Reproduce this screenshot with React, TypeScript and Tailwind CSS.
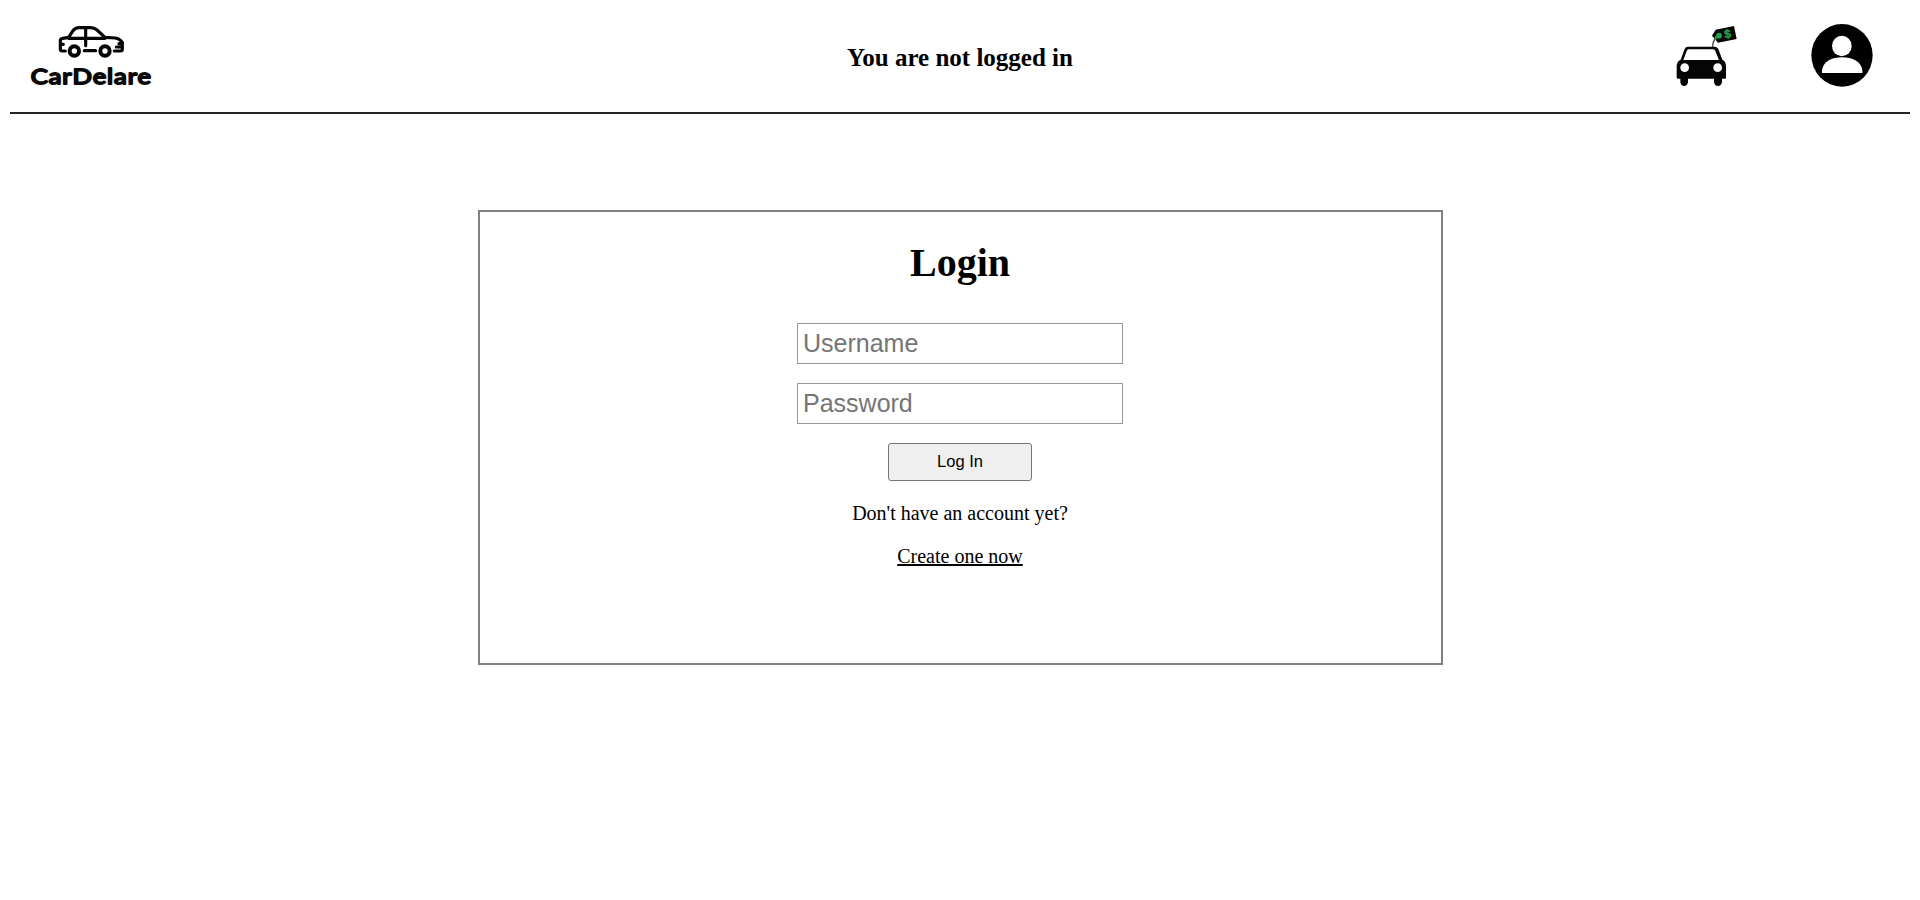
function Logo() {
  return (
    <svg className="h-[68px] w-[130px]" viewBox="84 36 390 204" fill="none" role="img" aria-label="CarDelare">
      <g stroke="#050505" strokeWidth="9.500" strokeLinecap="round" strokeLinejoin="round">
        <path d="M196 123 H187 Q181 123 181 117 V92 Q181 86 188 85 L206 82 L219 62 Q226 53 238 53 H272 Q283 53 291 60 L315 82 L346 84 Q360 86 367 97 V118 Q367 123 361 123 H343" />
        <path d="M206 85 H315 M257 55 V107 M183 103 H190 M357 101 H366 M349 111 H365" />
        <path d="M253 122 H287" />
      </g>
      <circle cx="223" cy="123" r="14" fill="#fff" stroke="#050505" strokeWidth="12" />
      <circle cx="315" cy="123" r="14" fill="#fff" stroke="#050505" strokeWidth="12" />
      <text
        x="92"
        y="223"
        textLength="364"
        lengthAdjust="spacingAndGlyphs"
        letterSpacing="2.500"
        className="fill-[#090909] font-['Lato',sans-serif] text-[66px] font-normal"
        stroke="#090909"
        strokeWidth="5.500"
        strokeLinecap="round"
        strokeLinejoin="round"
      >
        CarDelare
      </text>
    </svg>
  );
}

function CarSaleIcon() {
  return (
    <svg className="h-[64px] w-[64px]" viewBox="45 42 192 192" role="img" aria-label="Cars for sale">
      <path d="M158 112 Q158 94 167 84" fill="none" stroke="#444" strokeWidth="4" />
      <path d="M156 77 L167 59 L222 48 L230 87 L174 98 Z" fill="#050505" />
      <path d="M166 87 Q169 77 177 76" fill="none" stroke="#27a04b" strokeWidth="6" strokeLinecap="round" />
      <circle cx="177" cy="77" r="8.500" fill="#27a04b" />
      <text x="193" y="84" transform="rotate(-10 203 73)" stroke="#27a04b" strokeWidth="1" className="fill-[#27a04b] font-['Liberation_Sans',sans-serif] text-[36px] font-bold">
        $
      </text>
      <path
        d="M83 110 H163 Q171 110 175 117 L187 149 Q198 154 198 169 V203 Q198 206 194 206 H186 V217 Q184 228 174 228 Q164 228 162 217 V206 H84 V217 Q82 228 72 228 Q63 228 61 217 V206 H54 Q50 206 50 202 V169 Q50 154 62 149 L74 117 Q77 110 83 110 Z"
        fill="#050505"
      />
      <path d="M86 118 H159 Q164 118 166 123 L177 150 H70 L80 123 Q82 118 86 118 Z" fill="#fff" />
      <circle cx="74" cy="173" r="13" fill="#fff" />
      <circle cx="173" cy="173" r="13" fill="#fff" />
    </svg>
  );
}

function AccountIcon() {
  return (
    <svg className="h-[64px] w-[64px]" viewBox="30 39 192 192" role="img" aria-label="Account">
      <ellipse cx="126" cy="136" rx="92" ry="94" fill="#000" />
      <ellipse cx="125.500" cy="108" rx="29.500" ry="30.500" fill="#fff" />
      <path d="M66 189 V180 C70 155 94 142 126 142 C158 142 183 155 187 180 V189 Z" fill="#fff" />
    </svg>
  );
}

export default function App() {
  return (
    <div className="flex min-h-[900px] flex-col bg-white px-2.5 font-['Liberation_Serif',serif] text-black">
      <header className="grid h-[114px] grid-cols-[1fr_auto_1fr] border-b-2 border-[#232323]">
        <a href="#" className="mt-[22px] ml-[18px] justify-self-start">
          <Logo />
        </a>
        <h2 className="mt-[43px] text-[25px] leading-[29px] font-bold">You are not logged in</h2>
        <nav className="mr-[36px] flex justify-end gap-[71px]">
          <a href="#" className="mt-[24px] h-16">
            <CarSaleIcon />
          </a>
          <a href="#" className="mt-[23px] h-16">
            <AccountIcon />
          </a>
        </nav>
      </header>
      <main className="mt-24 ml-[468px] flex h-[455px] w-[965px] flex-col items-center border-2 border-[#808080] pr-px">
        <h1 className="mt-[28px] text-[40px] leading-[46px] font-bold">Login</h1>
        <form className="mt-[37px] flex flex-col items-center font-['Liberation_Sans',sans-serif]">
          <input
            type="text"
            placeholder="Username"
            className="h-[41px] w-[326px] border border-[#999] px-[5px] text-[25px] leading-[29px] placeholder:text-[#757575]"
          />
          <input
            type="password"
            placeholder="Password"
            className="mt-[19px] h-[41px] w-[326px] border border-[#999] px-[5px] text-[25px] leading-[29px] placeholder:text-[#757575]"
          />
          <button type="button" className="mt-[19px] h-[38px] w-36 rounded-[3px] border border-[#767676] bg-[#efefef] pb-0.5 text-[16.500px]">
            Log In
          </button>
        </form>
        <p className="mt-[21px] text-[20px] leading-[23px]">Don't have an account yet?</p>
        <a href="#" className="mt-5 text-[20px] leading-[23px] underline">
          Create one now
        </a>
      </main>
    </div>
  );
}
